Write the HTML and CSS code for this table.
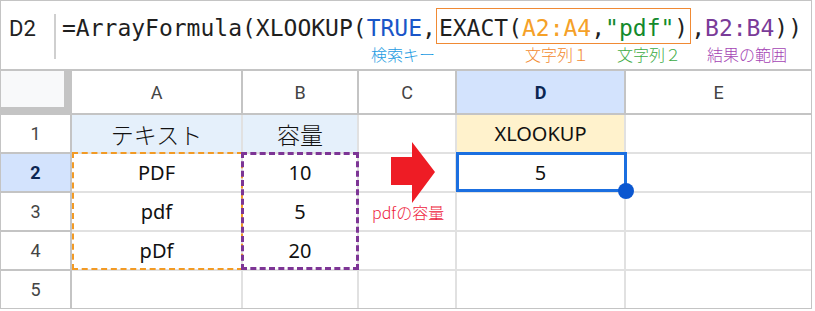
FILE: index.html
```html
<!DOCTYPE html>
<html lang="ja">
<head>
<meta charset="utf-8">
<link rel="stylesheet" href="styles.css">
</head>
<body>
<div class="sheet">
  <div class="fbar">
    <div class="namebox">D2</div>
    <div class="sep"></div>
    <div class="fx">
      <div class="formula">=ArrayFormula(XLOOKUP(<span class="c-blue">TRUE</span>,<span class="exact">EXACT(<span class="c-orange">A2:A4</span>,<span class="c-green">"pdf"</span>)</span>,<span class="c-purple">B2:B4</span>))</div>
      <div class="labels">
        <span class="lb lb-key">検索キー</span>
        <span class="lb lb-s1">文字列１</span>
        <span class="lb lb-s2">文字列２</span>
        <span class="lb lb-res">結果の範囲</span>
      </div>
    </div>
  </div>
  <div class="grid">
    <div class="corner"></div>
    <div class="ch">A</div>
    <div class="ch">B</div>
    <div class="ch">C</div>
    <div class="ch ch-sel">D</div>
    <div class="ch last">E</div>

    <div class="rh">1</div>
    <div class="cell hdr-blue jp">テキスト</div>
    <div class="cell hdr-blue jp">容量</div>
    <div class="cell"></div>
    <div class="cell hdr-yellow">XLOOKUP</div>
    <div class="cell last"></div>

    <div class="rh rh-sel">2</div>
    <div class="cell">PDF</div>
    <div class="cell">10</div>
    <div class="cell"></div>
    <div class="cell">5</div>
    <div class="cell last"></div>

    <div class="rh">3</div>
    <div class="cell">pdf</div>
    <div class="cell">5</div>
    <div class="cell"></div>
    <div class="cell"></div>
    <div class="cell last"></div>

    <div class="rh">4</div>
    <div class="cell">pDf</div>
    <div class="cell">20</div>
    <div class="cell"></div>
    <div class="cell"></div>
    <div class="cell last"></div>

    <div class="rh bottom">5</div>
    <div class="cell bottom"></div>
    <div class="cell bottom"></div>
    <div class="cell bottom"></div>
    <div class="cell bottom"></div>
    <div class="cell bottom last"></div>

    <div class="range range-a"></div>
    <div class="range range-b"></div>
    <div class="selection"><div class="handle"></div></div>
    <svg class="arrow" width="46" height="64" viewBox="0 0 46 64">
      <polygon points="1,16 22,16 22,1 45,31 22,62 22,44 1,44" fill="#ee1c25"/>
    </svg>
    <div class="note">pdfの容量</div>
  </div>
</div>
</body>
</html>
```

FILE: styles.css
```css
* { box-sizing: border-box; }
html, body { margin: 0; padding: 0; background: #fff; }
body {
  font-family: "Noto Sans", "Noto Sans CJK JP", sans-serif;
  color: #111;
}
.sheet {
  width: 812px;
  height: 309px;
  border: 1px solid #c4c4c4;
  display: flex;
  flex-direction: column;
}
.fbar {
  height: 70px;
  border-bottom: 2px solid #c4c4c4;
  display: flex;
  align-items: flex-start;
}
.namebox {
  width: 53px;
  padding-left: 8px;
  padding-top: 13px;
  font-family: Roboto, "Noto Sans", sans-serif;
  font-size: 22px;
  line-height: 30px;
  color: #222;
}
.sep {
  width: 2px;
  height: 45px;
  margin-top: 13px;
  background: #cfcfcf;
}
.fx {
  padding-left: 6px;
  padding-top: 7px;
}
.formula {
  font-family: "DejaVu Sans Mono", monospace;
  font-size: 23px;
  line-height: 28px;
  color: #1f1f1f;
  white-space: nowrap;
}
.exact {
  display: inline-block;
  border: 1px solid #f08a34;
  padding: 5px 2px 1px 2px;
  line-height: 28px;
}
.c-blue { color: #1a56c8; }
.c-orange { color: #f5a128; }
.c-green { color: #138a2c; }
.c-purple { color: #7a3b98; }
.labels {
  display: flex;
  font-family: "Noto Sans CJK JP", sans-serif;
  font-size: 16px;
  font-weight: 300;
  line-height: 20px;
  white-space: nowrap;
}
.lb-key { color: #1d9be2; margin-left: 309px; }
.lb-s1 { color: #f28a30; margin-left: 90px; }
.lb-s2 { color: #3cab44; margin-left: 28px; }
.lb-res { color: #a443b4; margin-left: 26px; }

.grid {
  position: relative;
  display: grid;
  grid-template-columns: 71px 171px 116px 98px 169px 185px;
  grid-template-rows: 44px 39px 39px 39px 39px 37px;
}
.grid > div {
  display: flex;
  align-items: center;
  justify-content: center;
}
.corner {
  background: #f8f9fa;
  border-right: 8px solid #c4c4c4;
  border-bottom: 8px solid #c4c4c4;
}
.ch {
  border-right: 2px solid #c4c4c4;
  border-bottom: 2px solid #c4c4c4;
  font-family: Roboto, sans-serif;
  font-size: 18px;
  color: #444;
}
.ch-sel {
  background: #d3e3fd;
  color: #0b2652;
  font-weight: 700;
}
.rh {
  border-right: 2px solid #c4c4c4;
  border-bottom: 2px solid #c4c4c4;
  font-family: Roboto, sans-serif;
  font-size: 18px;
  color: #444;
}
.rh-sel {
  background: #d3e3fd;
  color: #0b2652;
  font-weight: 700;
}
.cell {
  border-right: 2px solid #e1e1e1;
  border-bottom: 2px solid #e1e1e1;
  font-size: 20px;
  color: #111;
}
.grid > .last { border-right: 0; }
.grid > .bottom { border-bottom: 0; }
.jp {
  font-family: "Noto Sans CJK JP", sans-serif;
  font-size: 23px;
  font-weight: 300;
}
.hdr-blue { background: #e5f0fb; }
.hdr-yellow { background: #fff2cc; }

.range {
  position: absolute;
  top: 81px;
  height: 118px;
}
.range-a {
  left: 71px;
  width: 171px;
  border: 2px dashed #f29a24;
}
.range-b {
  left: 240px;
  width: 118px;
  border: 3px dashed #7d3595;
}
.selection {
  position: absolute;
  left: 455px;
  top: 81px;
  width: 171px;
  height: 40px;
  border: 3px solid #1b6fe0;
}
.handle {
  position: absolute;
  right: -10px;
  bottom: -10px;
  width: 16px;
  height: 16px;
  border-radius: 50%;
  background: #0b57d0;
}
.arrow {
  position: absolute;
  left: 389px;
  top: 70px;
}
.note {
  position: absolute;
  left: 371px;
  top: 131px;
  font-family: "Noto Sans CJK JP", sans-serif;
  font-size: 16px;
  font-weight: 300;
  line-height: 20px;
  color: #ee1c3c;
  white-space: nowrap;
}
```
